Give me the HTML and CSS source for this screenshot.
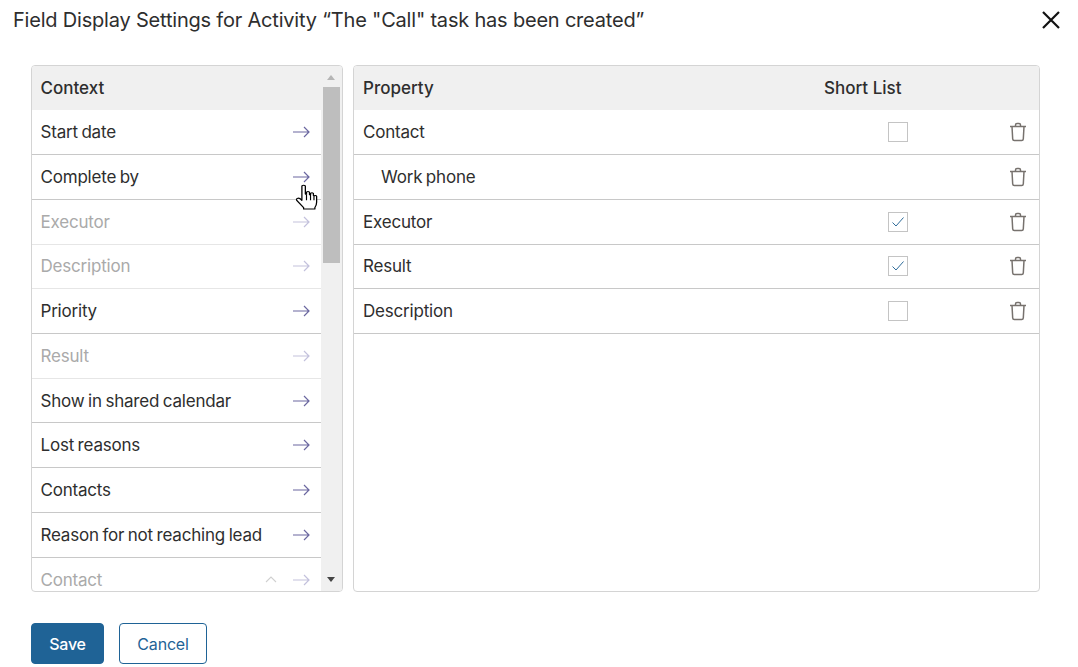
FILE: index.html
```html
<!DOCTYPE html>
<html lang="en">
<head>
    <meta charset="UTF-8">
    <meta name="viewport" content="width=device-width, initial-scale=1.0">
    <title>Field Display Settings</title>
    <link rel="stylesheet" href="styles.css">
</head>
<body>
    <svg width="0" height="0" class="defs">
        <symbol id="arrow" viewBox="0 0 18 12">
            <path d="M1 6H17M12 1l5 5-5 5" fill="none" stroke="currentColor" stroke-width="1.200"/>
        </symbol>
        <symbol id="trash" viewBox="0 0 18 20">
            <path d="M1 4.500h16M6.500 4.500V3q0-1.500 1.500-1.500h2q1.500 0 1.500 1.500v1.500M3 4.500l.7 12.500q.1 1.500 1.600 1.500h7.400q1.500 0 1.600-1.500l.7-12.500" fill="none" stroke="currentColor" stroke-width="1.500"/>
        </symbol>
    </svg>

    <div class="dialog">
        <div class="dialog-head">
            <h1>Field Display Settings for Activity “The "Call" task has been created”</h1>
            <svg class="close" width="20" height="20" viewBox="0 0 20 20">
                <path d="M2 2l16 16M18 2L2 18" fill="none" stroke="#111" stroke-width="2.200"/>
            </svg>
        </div>

        <div class="panels">
            <div class="panel panel-context">
                <div class="list">
                    <div class="list-head">Context</div>
                    <div class="row"><span>Start date</span><svg class="arrow"><use href="#arrow"/></svg></div>
                    <div class="row"><span>Complete by</span><svg class="arrow"><use href="#arrow"/></svg></div>
                    <div class="row off"><span>Executor</span><svg class="arrow"><use href="#arrow"/></svg></div>
                    <div class="row off"><span>Description</span><svg class="arrow"><use href="#arrow"/></svg></div>
                    <div class="row"><span>Priority</span><svg class="arrow"><use href="#arrow"/></svg></div>
                    <div class="row off"><span>Result</span><svg class="arrow"><use href="#arrow"/></svg></div>
                    <div class="row"><span>Show in shared calendar</span><svg class="arrow"><use href="#arrow"/></svg></div>
                    <div class="row"><span>Lost reasons</span><svg class="arrow"><use href="#arrow"/></svg></div>
                    <div class="row"><span>Contacts</span><svg class="arrow"><use href="#arrow"/></svg></div>
                    <div class="row"><span>Reason for not reaching lead</span><svg class="arrow"><use href="#arrow"/></svg></div>
                    <div class="row off">
                        <span>Contact</span>
                        <svg class="chevron" width="12" height="7" viewBox="0 0 12 7"><path d="M1 6l5-5 5 5" fill="none" stroke="currentColor" stroke-width="1.100"/></svg>
                        <svg class="arrow"><use href="#arrow"/></svg>
                    </div>
                </div>
                <div class="scrollbar">
                    <div class="scroll-up"></div>
                    <div class="scroll-thumb"></div>
                    <div class="scroll-down"></div>
                </div>
            </div>

            <div class="panel panel-props">
                <div class="props-head">
                    <span class="col-name">Property</span>
                    <span class="col-short">Short List</span>
                </div>
                <div class="prop-row">
                    <span class="col-name">Contact</span>
                    <span class="check"></span>
                    <svg class="trash"><use href="#trash"/></svg>
                </div>
                <div class="prop-row">
                    <span class="col-name sub">Work phone</span>
                    <svg class="trash"><use href="#trash"/></svg>
                </div>
                <div class="prop-row">
                    <span class="col-name">Executor</span>
                    <span class="check"><svg width="14" height="12" viewBox="0 0 14 12"><path d="M1.500 6.500l3.500 3.500 7.500-8.500" fill="none" stroke="#2f6c9a" stroke-width="1"/></svg></span>
                    <svg class="trash"><use href="#trash"/></svg>
                </div>
                <div class="prop-row">
                    <span class="col-name">Result</span>
                    <span class="check"><svg width="14" height="12" viewBox="0 0 14 12"><path d="M1.500 6.500l3.500 3.500 7.500-8.500" fill="none" stroke="#2f6c9a" stroke-width="1"/></svg></span>
                    <svg class="trash"><use href="#trash"/></svg>
                </div>
                <div class="prop-row">
                    <span class="col-name">Description</span>
                    <span class="check"></span>
                    <svg class="trash"><use href="#trash"/></svg>
                </div>
            </div>
        </div>

        <div class="actions">
            <button class="btn btn-save">Save</button>
            <button class="btn btn-cancel">Cancel</button>
        </div>
    </div>

    <!-- mouse pointer from the capture -->
    <svg class="pointer" width="23" height="26" viewBox="0 0 20 27" preserveAspectRatio="none">
        <path d="M6 2q1.500-1.500 3 0v8.500l1 .2V8.500q1.300-1.300 2.600 0v2.700l.9.200V9.700q1.300-1.200 2.500 0v2.300l.8.200q1.200-.8 2 .5v6.300q0 3-1.500 5.500v1.500H7.500v-1.500L1.500 17q-.7-1.700 1-2.300 1.700-.2 3.500 2.300z" fill="#fff" stroke="#000" stroke-width="1.100" stroke-linejoin="round"/>
        <path d="M10 11v6M13.500 11v6M16.500 12v5" stroke="#000" stroke-width="1" fill="none"/>
    </svg>
</body>
</html>
```

FILE: styles.css
```css
* { box-sizing: border-box; }
body { margin: 0; background-color: #fff; font-family: Inter, "Liberation Sans", sans-serif; font-size: 17px; letter-spacing: -0.2px; word-spacing: -1px; color: #2e2e2e; overflow: hidden; }
.defs { display: block; height: 0; }

.dialog { width: 1078px; height: 667px; display: flex; flex-direction: column; }
.dialog-head { height: 65px; padding: 7px 17px 0 13px; display: flex; justify-content: space-between; align-items: flex-start; }
.dialog-head h1 { margin: 0; font-size: 20px; font-weight: 400; line-height: 26px; letter-spacing: -0.2px; word-spacing: 0; }
.close { margin-top: 3px; }

.panels { display: flex; gap: 10px; margin-left: 31px; width: 1009px; height: 527px; }
.panel { border: 1px solid #d4d4d4; border-radius: 4px; overflow: hidden; }
.panel-context { width: 312px; display: flex; }
.panel-props { flex: 1; }

.list { width: 289px; overflow: hidden; }
.list-head, .props-head { height: 44.4px; margin-bottom: 0.25px; background-color: #f0f0f0; font-weight: 500; font-size: 17px; letter-spacing: 0; word-spacing: 0; display: flex; align-items: center; }
.list-head { padding-left: 8.500px; }
.row { height: 44.7px; border-bottom: 1px solid #c8c8c8; padding: 0 11px 0.2px 8.500px; display: flex; align-items: center; }
.row span { flex: 1; }
.row.off { color: #aaa; border-bottom-color: #e6e6e6; }
.row.off:last-child { border-bottom: none; }
.arrow { width: 18px; height: 12px; color: #6b67a0; }
.off .arrow { color: #c3c1dc; }
.chevron { color: #d0d0d0; margin-right: 15px; }

.scrollbar { width: 21px; background-color: #f0f0f0; padding: 0 2px; display: flex; flex-direction: column; flex: none; }
.scroll-up { height: 21px; flex: none; position: relative; }
.scroll-up::after { content: ""; position: absolute; left: 4px; top: 9px; border: 4.500px solid transparent; border-top: 0; border-bottom: 5px solid #b5b5b5; }
.scroll-thumb { height: 176px; background-color: #bebebe; flex: none; }
.scroll-down { margin-top: auto; height: 20px; position: relative; }
.scroll-down::after { content: ""; position: absolute; left: 4px; top: 6px; border: 4.500px solid transparent; border-bottom: 0; border-top: 5px solid #444; }

.props-head { padding-left: 9px; }
.col-name { width: 461px; flex: none; }
.col-short { width: 80px; }
.prop-row { height: 44.7px; border-bottom: 1px solid #c8c8c8; padding: 0 0 0.2px 9px; display: flex; align-items: center; }
.prop-row .col-name { width: 470px; }
.sub { padding-left: 18px; }
.check { width: 20px; height: 20px; margin-left: 55px; border: 1px solid #c4c4c4; display: flex; align-items: center; justify-content: center; }
.trash { width: 18px; height: 20px; color: #77726e; margin-left: auto; margin-right: 12px; }

.actions { display: flex; gap: 15px; padding: 31px 0 0 31px; }
.btn { height: 41px; border-radius: 4px; font-family: inherit; font-size: 16px; letter-spacing: -0.2px; border: 1px solid #1f6396; cursor: pointer; }
.btn-save { width: 73px; background-color: #1f6396; color: #fff; font-weight: 500; }
.btn-cancel { width: 88px; background-color: #fff; color: #1f6396; }

.pointer { position: absolute; left: 295px; top: 184px; }
```
